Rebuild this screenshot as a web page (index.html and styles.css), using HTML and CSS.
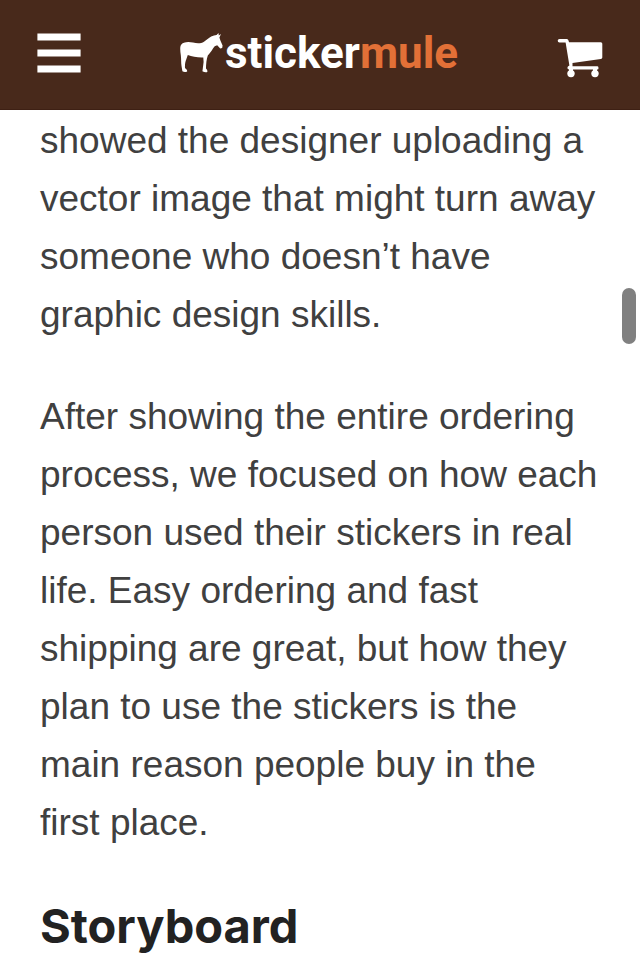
FILE: index.html
```
<!DOCTYPE html>
<html lang="en">
<head>
<meta charset="utf-8">
<meta name="viewport" content="width=device-width, initial-scale=1">
<title>Sticker Mule</title>
<link rel="stylesheet" href="styles.css">
</head>
<body>
<header class="site-header">
  <button class="menu-button" type="button" aria-label="Menu">
    <svg width="44" height="40" viewBox="0 0 44 40" fill="#fff" aria-hidden="true"><path d="M.4.4h43.2v7.2H.4zM.4 16.4h43.2v7.2H.4zM.4 32.4h43.2v7.2H.4z"/></svg>
  </button>
  <a class="logo" href="#">
    <svg class="mule" width="44" height="40" viewBox="0 0 44 40" fill="#fff" aria-hidden="true"><path d="M1 12C-.2 14 .2 18 .8 22C1.3 26 1 30 1.5 33L2.4 38.2Q4.5 39.6 7.2 38.4L7 37L5 35C4.8 31.5 5.2 28.5 6.4 26C7 24.8 7.2 23.4 7.8 22C12 23.6 17.5 24.6 23.3 24.4L23.6 29L22.8 35.5L22.4 38.2Q25 39.8 27.4 39L27.2 37L26 35.5C26 31 26.5 26 27.8 22.4C31 19.5 32.5 15.5 34.7 13.2L37.2 12.2L40.2 15.6L42.2 15L42.6 12.5L40.4 7.5L39.4 4.6L41 .9L38.8 2.6L38.5 0L36.6 2L34 2.5C30 3.6 27 6.5 24 8.8C21 10.7 17 10.6 13 9.6C8 8.5 3 9 1 12Z"/></svg>
    <span class="wordmark">sticker<span class="wordmark-accent">mule</span></span>
  </a>
  <a class="cart" href="#" aria-label="Cart">
    <svg width="46" height="40" viewBox="0 0 46 40" fill="#fff" aria-hidden="true"><path d="M2.5 1h7.3q1.4 0 1.8 1.8l.4 1.4h31.8q1.5 0 1.5 1.5V19.5q0 1.4-1.5 1.6L15.5 25.1v3.1h25q1 0 1 1.7t-1 1.6H12q-1.6 0-1.6-1.8 0-1.4 2-2.2L8.6 4.6H2.5Q.7 4.6.7 2.8.7 1 2.5 1z"/><path d="M12 31h4v3h-4zM36 31h4v3h-4z"/><circle cx="14" cy="35.6" r="3.7"/><circle cx="38" cy="35.6" r="3.7"/></svg>
  </a>
</header>
<main class="article">
  <p>showed the designer uploading a vector image that might turn away someone who doesn’t have graphic design skills.</p>
  <p>After showing the entire ordering process, we focused on how each person used their stickers in real life. Easy ordering and fast shipping are great, but how they plan to use the stickers is the main reason people buy in the first place.</p>
  <h2>Storyboard</h2>
</main>
<div class="scroll-thumb" aria-hidden="true"></div>
</body>
</html>
```
FILE: styles.css
```
* {
  box-sizing: border-box;
}

body {
  margin: 0;
  background: #fff;
  color: #404040;
  font-family: "Liberation Sans", Arial, sans-serif;
  overflow: hidden;
}

.site-header {
  display: flex;
  align-items: center;
  justify-content: space-between;
  height: 110px;
  padding: 0 37px 4px;
  background: #48291b;
  border-bottom: 1px solid #3e2014;
}

.menu-button {
  padding: 0;
  border: 0;
  background: none;
  cursor: pointer;
}

.menu-button svg,
.cart svg,
.mule {
  display: block;
}

.logo {
  display: flex;
  align-items: center;
  gap: 1px;
  color: #fff;
  text-decoration: none;
}

.wordmark {
  font: bold 44px/56px Roboto, sans-serif;
}

.wordmark-accent {
  color: #e27037;
}

.cart {
  padding-top: 10px;
}

.article {
  padding: 2px 40px 0;
}

.article p {
  margin: 0 0 44px;
  font-size: 37px;
  line-height: 58px;
}

.article h2 {
  margin: 0;
  color: #222;
  font: bold 47px/60px Inter, sans-serif;
}

.scroll-thumb {
  position: absolute;
  top: 288px;
  right: 4px;
  width: 14px;
  height: 56px;
  border-radius: 7px;
  background: #808080;
}
```
